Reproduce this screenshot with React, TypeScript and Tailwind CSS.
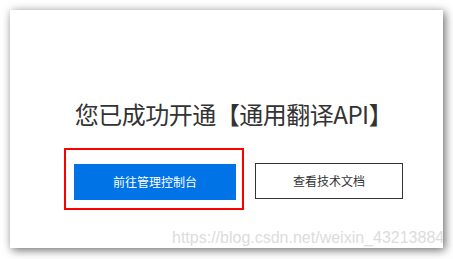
export default function App() {
  return (
    <div className="w-[453px] h-[259px] bg-white p-[10px] font-['Noto_Sans_CJK_SC',sans-serif]">
      <div className="relative overflow-hidden w-[433px] h-[238px] bg-white shadow-[2px_2px_9px_rgba(0,0,0,0.6)] flex flex-col items-center pl-[14px] pt-[92px]">
        <h1 className="text-[24px] leading-[24px] tracking-[-0.5px] text-[#333] font-normal whitespace-nowrap">
          您已成功开通【通用翻译API】
        </h1>
        <div className="flex items-start gap-[11px] mt-[22px]">
          <div className="border-2 border-[#f00] pt-[14px] pb-[8px] pl-[8px] pr-[6px]">
            <button className="w-[162px] h-[36px] bg-[#0073e6] text-white text-[12px] leading-none">
              前往管理控制台
            </button>
          </div>
          <button className="mt-[15px] w-[148px] h-[36px] border border-[#333] bg-white text-[#333] text-[12px] leading-none">
            查看技术文档
          </button>
        </div>
        <span className="absolute left-[162px] top-[219px] text-[16px] leading-[18px] text-[#dcdcdc] whitespace-nowrap font-['Liberation_Sans',Arial,sans-serif]">
          https://blog.csdn.net/weixin_43213884
        </span>
      </div>
    </div>
  );
}
